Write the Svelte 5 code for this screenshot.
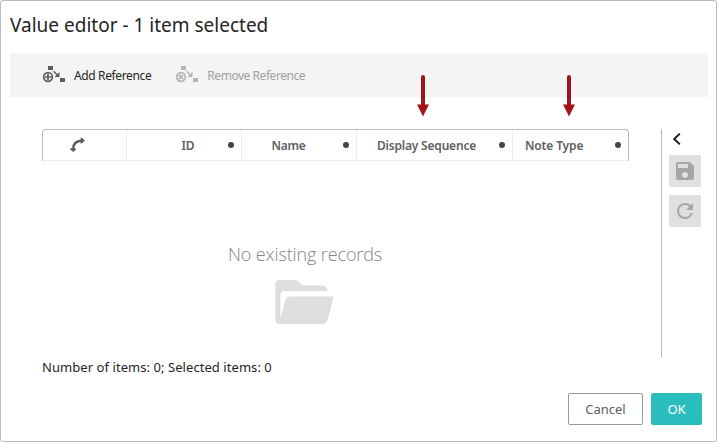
<script>
  const columns = [
    { label: 'ID', width: 115, shift: 54.5, spacing: -0.2 },
    { label: 'Name', width: 115, shift: 29.5, spacing: -0.3 },
    { label: 'Display Sequence', width: 156, shift: 20, spacing: -0.2 },
    { label: 'Note Type', width: 115, shift: 12, spacing: -0.15 }
  ];
  const actions = [
    { label: 'Add Reference', kind: 'add' },
    { label: 'Remove Reference', kind: 'remove' }
  ];
  const markers = [423, 569];
</script>

<div class="dialog">
  <i class="corner"></i>
  <h1><span>Value editor - 1 item selected</span></h1>
  <div class="toolbar">
    {#each actions as action}
      <button class="action {action.kind}">
        <svg width="24" height="18" viewBox="0 0 24 18">
          <path d="M5 0h5v4H5zM17 12h5v4h-5z" fill="currentColor" />
          <circle cx="5" cy="11" r="4.3" fill="none" stroke="currentColor" stroke-width="1.7" />
          <path d={action.kind === 'add' ? 'M5 8v6M2 11h6' : 'M2.9 8.9l4.2 4.2M7.1 8.9l-4.2 4.2'} stroke="currentColor" stroke-width="1.7" />
          <path d="M10.5 5.2l4.2 4" stroke="currentColor" stroke-width="1.5" />
          <path d="M16.5 6v5h-5z" fill="currentColor" />
        </svg>
        <span>{action.label}</span>
      </button>
    {/each}
  </div>

  <main>
    <section class="records">
      <div class="header">
        <div class="cell link">
          <svg width="18" height="16" viewBox="0 0 18 16">
            <path d="M4.2 12C4.2 7 7.2 4 12.5 3.8" fill="none" stroke="#5d5d60" stroke-width="2.4" />
            <path d="M11.6.8L12.8.8 16 3.4 12.8 6.6 11.6 6.4zM1 11.2L7.2 11.4 7 12.4 4.2 15 1 12.2z" fill="#5d5d60" />
          </svg>
        </div>
        {#each columns as col}
          <div class="cell" style:width="{col.width}px">
            <span style:margin-left="{col.shift}px" style:letter-spacing="{col.spacing}px">{col.label}</span>
            <i class="dot"></i>
          </div>
        {/each}
      </div>
      <div class="empty">
        <p>No existing records</p>
        <svg width="60" height="45" viewBox="0 0 60 45">
          <path d="M5 0H20Q22 0 23.5 1.5L27.5 5.5H47Q51.5 5.5 52.8 11H10Q5.4 11 5.4 15V38.5L10.6 20Q11.4 16.6 15 16.6H58.7L52.8 39.5Q51.5 44 47 44H5Q0.4 44 0.4 39.5V4.5Q.4 0 5 0Z" fill="#dedede" />
        </svg>
      </div>
      <p class="status">Number of items: 0; Selected items: 0</p>
    </section>
    <aside>
      <svg class="chevron" width="10" height="14" viewBox="0 0 10 14"><path d="M7.8 1.6L2.2 7l5.6 5.4" fill="none" stroke="#1b1b1b" stroke-width="2" /></svg>
      <button class="tool" aria-label="Save">
        <svg width="24" height="24" viewBox="0 0 24 24"><path d="M17 3H5a2 2 0 0 0-2 2v14c0 1.1.9 2 2 2h14c1.1 0 2-.9 2-2V7l-4-4zm-5 16c-1.66 0-3-1.34-3-3s1.34-3 3-3 3 1.34 3 3-1.34 3-3 3zm3-10H5V5h10v4z" fill="#a6a6a6" /></svg>
      </button>
      <button class="tool" aria-label="Refresh">
        <svg width="24" height="24" viewBox="0 0 24 24"><path d="M17.65 6.35A7.96 7.96 0 0 0 12 4a8 8 0 1 0 7.73 10h-2.08A6 6 0 1 1 12 6c1.66 0 3.14.69 4.22 1.78L13 11h7V4l-2.35 2.35z" fill="#a6a6a6" /></svg>
      </button>
    </aside>
  </main>

  <footer>
    <button class="cancel">Cancel</button>
    <button class="ok">OK</button>
  </footer>

  {#each markers as x}
    <svg class="marker" style:left="{x - 8}px" width="14" height="43" viewBox="0 0 14 43">
      <path d="M7 3v29" stroke="#9f151e" stroke-width="4" stroke-linecap="round" />
      <path d="M1 30.5h12L7 42.5z" fill="#9f151e" />
    </svg>
  {/each}
</div>

<style>
  * { box-sizing: border-box; }
  p, h1 { margin: 0; font-weight: 400; white-space: nowrap; }
  button { font: inherit; padding: 0; border: 0; background: none; white-space: nowrap; }
  svg { display: block; flex: none; overflow: visible; }
  .dialog {
    position: relative; width: 717px; height: 442px; background: #fff;
    border: 1px solid #b9b9b9; border-radius: 3px; overflow: hidden;
    font-family: "Noto Sans", "Open Sans", sans-serif; font-size: 13px; color: #252525;
    display: flex; flex-direction: column;
  }
  .corner { position: absolute; left: -1px; top: -1px; width: 2px; height: 2px; background: #d9461d; }
  h1 { height: 52px; padding: 10px 0 0 9px; font-size: 19px; line-height: 28px; letter-spacing: 0; }
  .toolbar { height: 44px; flex: none; margin: 0 8px 0 9px; background: #f4f4f4; display: flex; padding-left: 33px; gap: 25px; }
  .action { display: flex; align-items: center; gap: 7px; font-size: 12px; letter-spacing: -0.37px; color: #252525; }
  .action svg { color: #5d5d60; }
  .action.remove { color: #a0a0a0; letter-spacing: -0.45px; }
  .action.remove svg { color: #b5b5b5; }
  main { display: flex; height: 264px; flex: none; padding: 32px 0 0 41px; }
  .records { width: 619px; display: flex; flex-direction: column; }
  .header {
    width: 587px; height: 32px; flex: none; display: flex; border: 1px solid #b9b9b9; border-bottom-color: #ececec;
    border-radius: 4px 4px 0 0;
  }
  .cell { display: flex; align-items: center; border-right: 1px solid #ececec; flex: none; font-size: 12px; font-weight: 600; color: #606063; white-space: nowrap; }
  .cell:last-child { border-right: 0; }
  .link { width: 84px; padding-left: 26px; }
  .dot { width: 6px; height: 6px; border-radius: 50%; background: #444; margin: 0 7px 0 auto; }
  .empty { width: 587px; height: 190px; flex: none; padding: 80px 0 0 186px; }
  .empty p { font-family: "Open Sans", "Noto Sans", sans-serif; font-weight: 300; font-size: 18px; line-height: 26px; color: #858585; letter-spacing: -0.12px; }
  .empty svg { margin: 13px 0 0 47px; }
  .status { line-height: 20px; margin-top: 6px; letter-spacing: 0.06px; }
  aside { border-left: 1px solid #b9b9b9; width: 42px; height: 228px; padding: 3px 0 0 7px; }
  .chevron { margin: 0 0 9px 3px; }
  .tool { width: 32px; height: 32px; border-radius: 2px; background: #e0e0e0; display: flex; align-items: center; justify-content: center; margin-bottom: 8px; }
  footer { display: flex; justify-content: flex-end; gap: 8px; padding: 32px 14px 0 0; }
  footer button { height: 32px; border-radius: 2px; }
  .cancel { width: 75px; border: 1px solid #999; color: #606063; }
  .ok { width: 51px; background: #29bebd; color: #fff; }
  .marker { position: absolute; top: 73px; }
</style>
